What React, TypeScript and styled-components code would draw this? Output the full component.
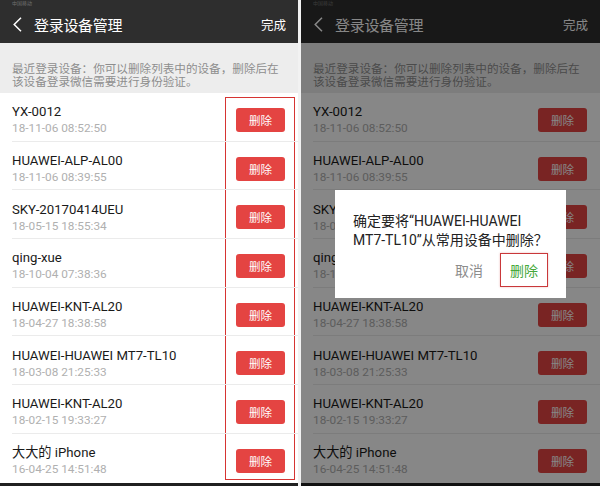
import styled, { createGlobalStyle } from "styled-components";

const GlobalStyle = createGlobalStyle`
  html, body {
    margin: 0;
    padding: 0;
    background: #ffffff;
  }
  body {
    font-family: Roboto, "Noto Sans CJK SC", "Noto Sans", sans-serif;
  }
`;

const Screen = styled.div`
  display: flex;
  width: 600px;
  height: 486px;
  gap: 3px;
  background: #f2f2f2;
  overflow: hidden;
`;

const Phone = styled.div<{ $w: number }>`
  position: relative;
  width: ${(p) => p.$w}px;
  height: 486px;
  display: flex;
  flex-direction: column;
  background: #ffffff;
  overflow: hidden;
`;

const StatusBar = styled.div`
  height: 6px;
  background: #2e2e2e;
  padding-left: 12px;
  font-size: 5px;
  line-height: 6px;
  color: #6e6e6e;
`;

const TopBar = styled.div`
  height: 37px;
  display: flex;
  align-items: center;
  padding: 0 12px 0 13px;
  background: #2e2e2e;
  color: #ffffff;
`;

const Back = styled.svg`
  width: 9px;
  height: 15px;
  margin-right: 12px;
  flex-shrink: 0;
`;

const Title = styled.div`
  flex: 1;
  font-size: 15px;
  letter-spacing: -0.3px;
`;

const Done = styled.div`
  font-size: 12.5px;
`;

const Info = styled.div`
  height: 50px;
  box-sizing: border-box;
  padding: 20px 12px 0;
  background: #ededed;
  color: #8e8e8e;
  font-size: 11.6px;
  line-height: 13px;
  white-space: nowrap;
`;

const List = styled.div`
  position: relative;
  flex: 1;
`;

const Row = styled.div`
  height: 48.7px;
  box-sizing: border-box;
  padding: 5px 13px 0 12px;
  display: flex;
  align-items: center;
  position: relative;

  &::after {
    content: "";
    position: absolute;
    left: 12px;
    right: 0;
    bottom: 0;
    height: 1px;
    background: #ebebeb;
  }
  &:last-child::after {
    display: none;
  }
`;

const Device = styled.div`
  flex: 1;
  min-width: 0;
`;

const Name = styled.div`
  font-size: 13.2px;
  line-height: 17px;
  color: #1a1a1a;
  white-space: nowrap;
`;

const Time = styled.div`
  font-size: 11.8px;
  line-height: 16px;
  color: #b0b0b0;
`;

const DeleteButton = styled.div`
  position: relative;
  z-index: 1;
  width: 49px;
  height: 24px;
  border-radius: 3px;
  background: #e44442;
  color: #ffffff;
  font-size: 11.5px;
  display: flex;
  align-items: center;
  justify-content: center;
`;

const Annotation = styled.div`
  position: absolute;
  z-index: 0;
  left: 225px;
  top: 4px;
  width: 70px;
  height: 383px;
  box-sizing: border-box;
  border: 1.5px solid #d63432;
  background: #ffffff;
`;

const BottomBar = styled.div`
  height: 3px;
  background: #202020;
`;

const Overlay = styled.div`
  position: absolute;
  z-index: 5;
  inset: 0;
  background: rgba(0, 0, 0, 0.47);
`;

const Dialog = styled.div`
  position: absolute;
  z-index: 6;
  left: 34px;
  top: 190px;
  width: 231px;
  height: 108px;
  box-sizing: border-box;
  padding: 22px 18px 0 18px;
  background: #ffffff;
`;

const DialogLine = styled.div`
  font-size: 14px;
  line-height: 19px;
  height: 19px;
  color: #222222;
  white-space: nowrap;
`;

const Actions = styled.div`
  display: flex;
  justify-content: flex-end;
  gap: 7px;
  margin-top: 3px;
`;

const Action = styled.div<{ $primary?: boolean }>`
  height: 34px;
  box-sizing: border-box;
  padding: 0 9px;
  display: flex;
  align-items: center;
  font-size: 14px;
  color: ${(p) => (p.$primary ? "#45a83a" : "#8c8c8c")};
  border: 1.5px solid ${(p) => (p.$primary ? "#c9383a" : "transparent")};
  box-shadow: ${(p) => (p.$primary ? "0 0 2px rgba(200,60,60,0.35)" : "none")};
`;

const devices = [
  { name: "YX-0012", time: "18-11-06 08:52:50" },
  { name: "HUAWEI-ALP-AL00", time: "18-11-06 08:39:55" },
  { name: "SKY-20170414UEU", time: "18-05-15 18:55:34" },
  { name: "qing-xue", time: "18-10-04 07:38:36" },
  { name: "HUAWEI-KNT-AL20", time: "18-04-27 18:38:58" },
  { name: "HUAWEI-HUAWEI MT7-TL10", time: "18-03-08 21:25:33" },
  { name: "HUAWEI-KNT-AL20", time: "18-02-15 19:33:27" },
  { name: "大大的 iPhone", time: "16-04-25 14:51:48" },
];

function DeviceScreen({ width, marked, children }: { width: number; marked?: boolean; children?: React.ReactNode }) {
  return (
    <Phone $w={width}>
      <StatusBar>中国移动</StatusBar>
      <TopBar>
        <Back viewBox="0 0 9 15">
          <polyline points="8,0.8 1.2,7.5 8,14.2" fill="none" stroke="#ffffff" strokeWidth="1.5" />
        </Back>
        <Title>登录设备管理</Title>
        <Done>完成</Done>
      </TopBar>
      <Info>
        最近登录设备：你可以删除列表中的设备，删除后在
        <br />
        该设备登录微信需要进行身份验证。
      </Info>
      <List>
        {marked && <Annotation />}
        {devices.map((d, i) => (
          <Row key={i}>
            <Device>
              <Name>{d.name}</Name>
              <Time>{d.time}</Time>
            </Device>
            <DeleteButton>删除</DeleteButton>
          </Row>
        ))}
      </List>
      <BottomBar />
      {children}
    </Phone>
  );
}

export default function App() {
  return (
    <>
      <GlobalStyle />
      <Screen>
        <DeviceScreen width={298} marked />
        <DeviceScreen width={299}>
          <Overlay />
          <Dialog>
            <DialogLine>确定要将“HUAWEI-HUAWEI</DialogLine>
            <DialogLine>MT7-TL10”从常用设备中删除？</DialogLine>
            <Actions>
              <Action>取消</Action>
              <Action $primary>删除</Action>
            </Actions>
          </Dialog>
        </DeviceScreen>
      </Screen>
    </>
  );
}
